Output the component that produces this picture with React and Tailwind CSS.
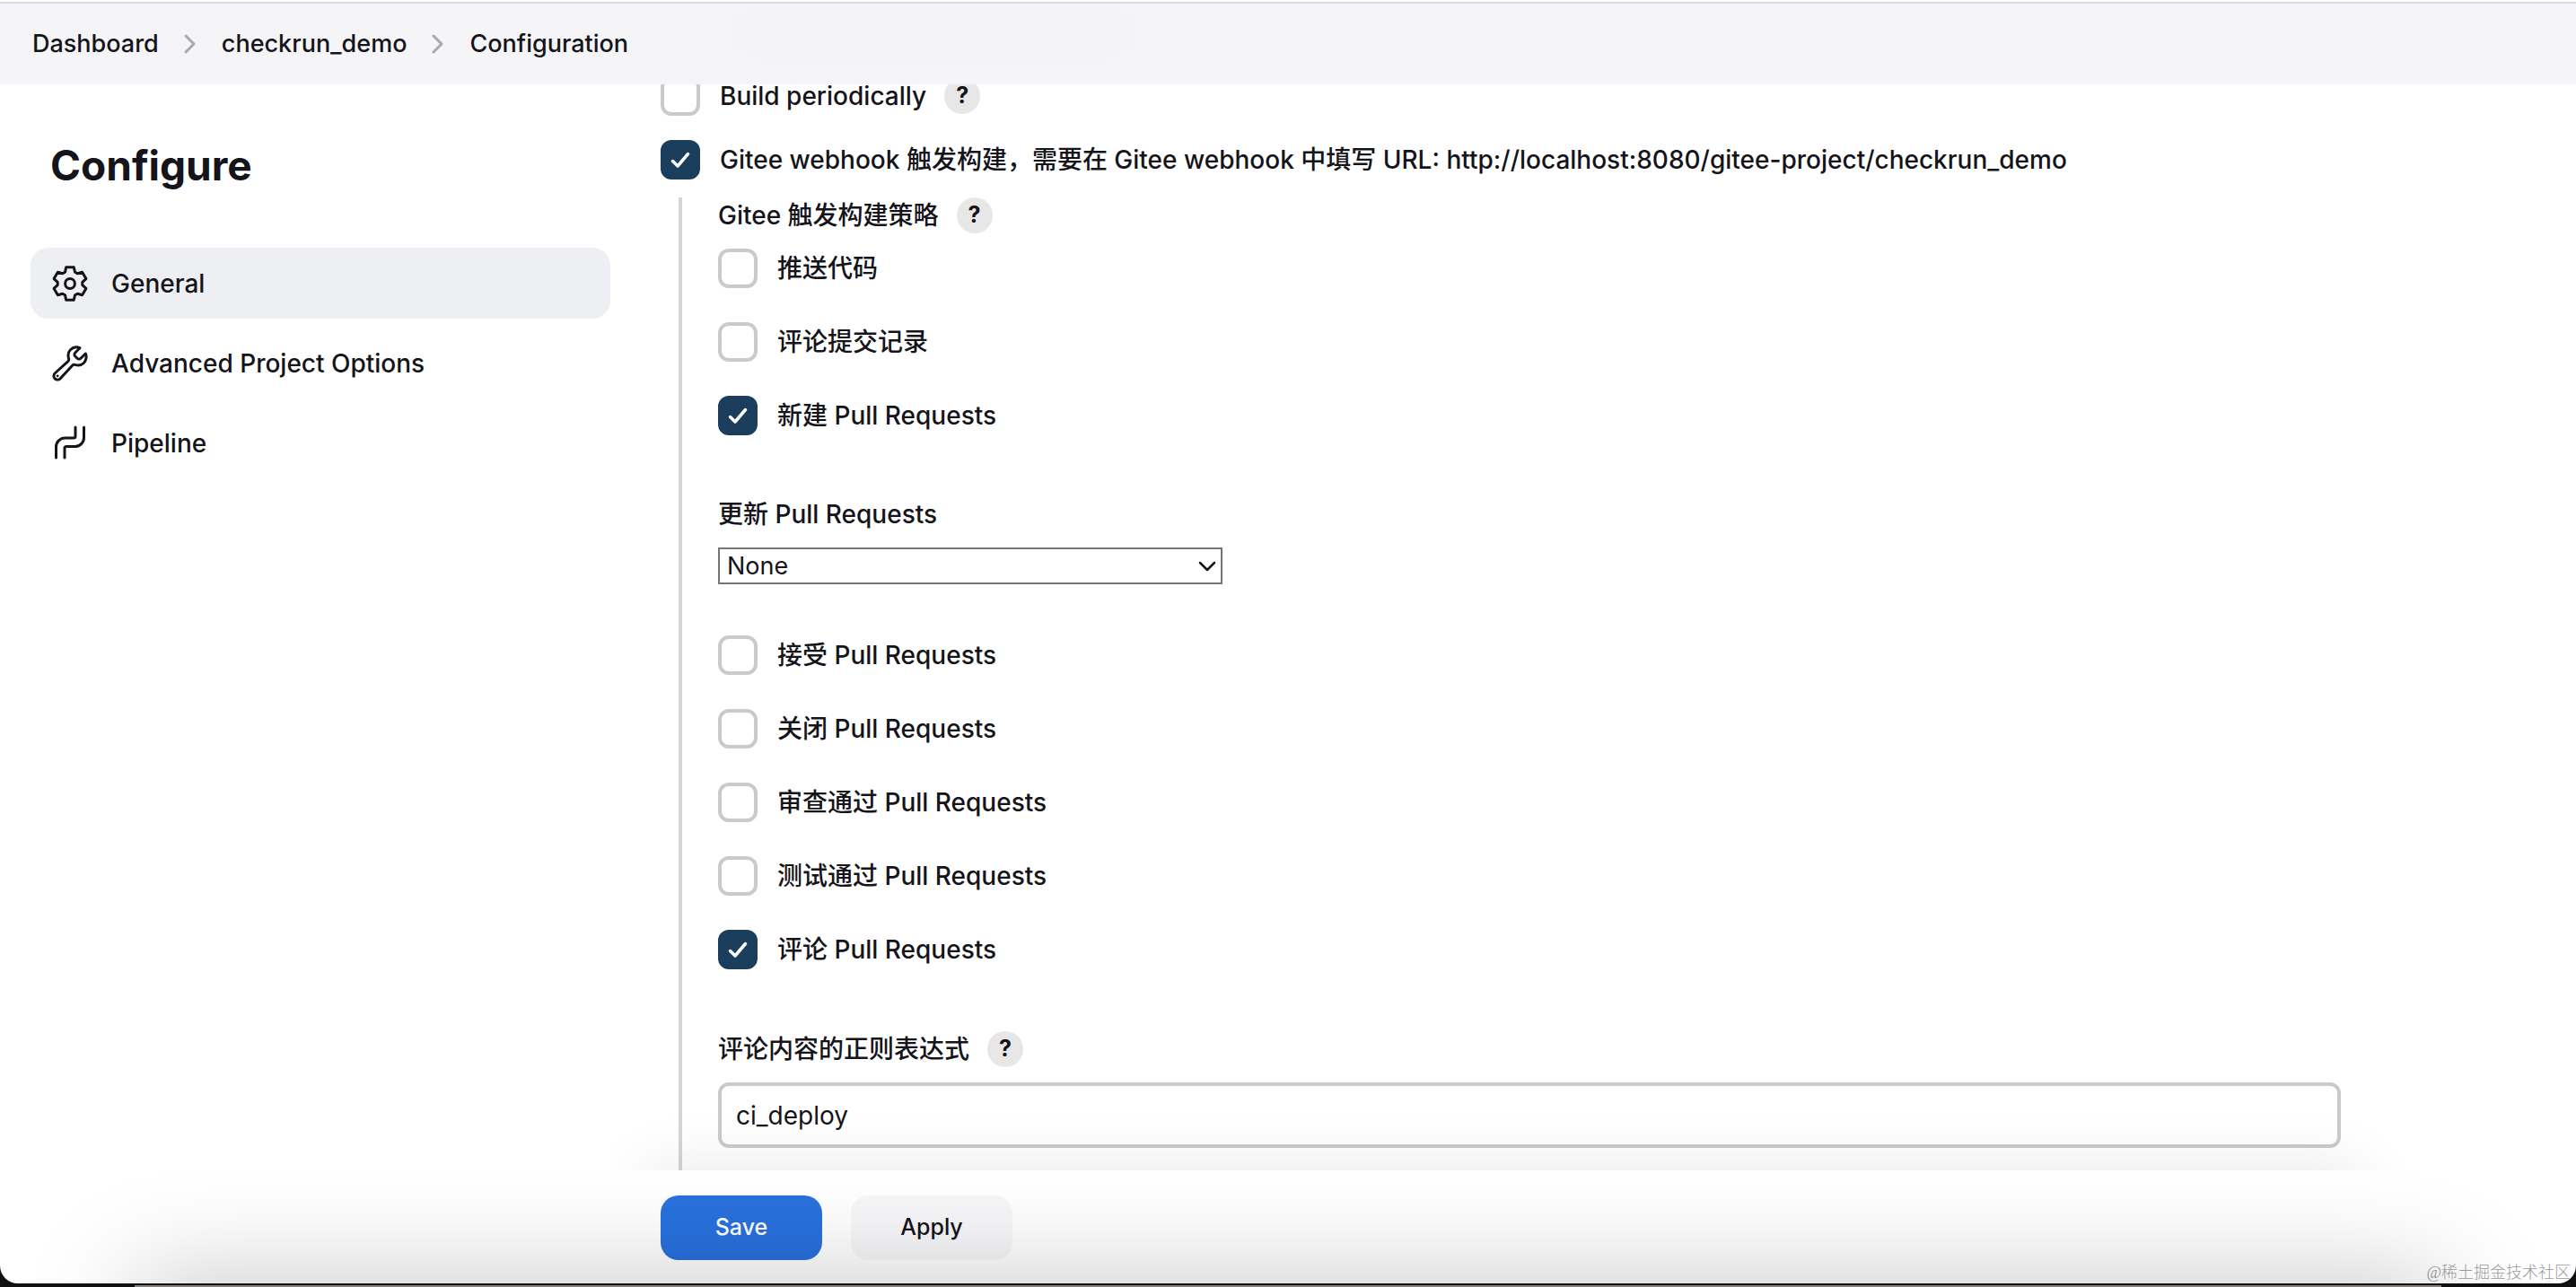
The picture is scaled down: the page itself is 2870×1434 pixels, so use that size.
import React, { useState } from 'react';

const NAV_ITEMS = [
  { id: 'general', label: 'General', icon: GearIcon },
  { id: 'advanced', label: 'Advanced Project Options', icon: WrenchIcon },
  { id: 'pipeline', label: 'Pipeline', icon: PipelineIcon },
];

const PUSH_OPTIONS = [
  { id: 'push', label: '推送代码' },
  { id: 'commitComment', label: '评论提交记录' },
  { id: 'openPr', label: '新建 Pull Requests' },
];

const PR_OPTIONS = [
  { id: 'acceptPr', label: '接受 Pull Requests' },
  { id: 'closePr', label: '关闭 Pull Requests' },
  { id: 'approvedPr', label: '审查通过 Pull Requests' },
  { id: 'testedPr', label: '测试通过 Pull Requests' },
  { id: 'commentPr', label: '评论 Pull Requests' },
];

function GearIcon() {
  return (
    <svg viewBox="-20 -20 40 40" className="size-10" fill="none" stroke="currentColor" strokeWidth="3" strokeLinecap="round" strokeLinejoin="round">
      <path d="M-5.5-12.8L-4.3-18.2H4.3L5.5-12.8L8.3-11.2L13.6-12.8L17.9-5.4L13.8-1.6V1.6L17.9 5.4L13.6 12.8L8.3 11.2L5.5 12.8L4.3 18.2H-4.3L-5.5 12.8L-8.3 11.2L-13.6 12.8L-17.9 5.4L-13.8 1.6V-1.6L-17.9-5.4L-13.6-12.8L-8.3-11.2Z" />
      <circle r="5.4" />
    </svg>
  );
}

function WrenchIcon() {
  return (
    <svg viewBox="26 26 460 460" className="size-10" fill="none" stroke="currentColor" strokeWidth="34" strokeLinecap="round" strokeLinejoin="round">
      <path d="M393.87 190a32.1 32.1 0 01-45.25 0l-26.57-26.57a32.09 32.09 0 010-45.26L382.19 58a1 1 0 00-.3-1.64c-38.82-16.64-89.15-8.16-121.11 23.57-30.58 30.35-32.32 76-21.12 115.84a31.93 31.93 0 01-9.06 32.08L64 380a48.17 48.17 0 1068 68l153.86-167a31.93 31.93 0 0131.6-9.13c39.54 10.59 84.54 8.6 114.72-21.19 32.49-32 39.5-88.56 23.75-120.93a1 1 0 00-1.6-.26z" />
      <circle cx="96" cy="416" r="16" fill="currentColor" stroke="none" />
    </svg>
  );
}

function PipelineIcon() {
  return (
    <svg viewBox="0 0 40 40" className="size-10" fill="none" stroke="currentColor" strokeWidth="3" strokeLinecap="round">
      <path d="M4.5 36V24a10 10 0 0 1 10-10H24a2 2 0 0 0 2-2V2" />
      <path d="M14 36V25.500a2 2 0 0 1 2-2h9.500a10 10 0 0 0 10-10V2" />
    </svg>
  );
}

function Separator() {
  return (
    <svg viewBox="0 0 16 24" className="h-6 w-4 text-[#a8a8ae]" fill="none" stroke="currentColor" strokeWidth="3" strokeLinecap="round" strokeLinejoin="round">
      <path d="M3 3l9 9-9 9" />
    </svg>
  );
}

function HelpButton({ label }) {
  return (
    <button
      type="button"
      aria-label={`Help for ${label}`}
      className="flex size-10 items-center justify-center rounded-full bg-[#e7e7e7] text-[25px] font-bold"
    >
      ?
    </button>
  );
}

function Checkbox({ id, label, checked, onChange, help }) {
  return (
    <div className="flex h-11 items-center gap-5">
      <label htmlFor={id} className="flex items-center gap-[22px] whitespace-nowrap">
        <span className="grid size-11 shrink-0">
          <input
            id={id}
            type="checkbox"
            checked={checked}
            onChange={() => onChange(id)}
            className="col-start-1 row-start-1 size-11 appearance-none rounded-xl border-4 border-[#c8cacb] bg-white checked:border-[#1a3e5c] checked:bg-[#1a3e5c]"
          />
          {checked && (
            <svg viewBox="0 0 44 44" className="pointer-events-none col-start-1 row-start-1 size-11" fill="none" stroke="white" strokeWidth="3.5" strokeLinecap="round" strokeLinejoin="round">
              <path d="M13.500 23.500l5.500 5.500 11.500-13.500" />
            </svg>
          )}
        </span>
        {label}
      </label>
      {help && <HelpButton label={label} />}
    </div>
  );
}

export default function App() {
  const [active, setActive] = useState('general');
  const [updateMode, setUpdateMode] = useState('None');
  const [pattern, setPattern] = useState('ci_deploy');
  const [checked, setChecked] = useState({
    webhook: true,
    openPr: true,
    commentPr: true,
  });

  const toggle = (id) => {
    setChecked(prev => ({ ...prev, [id]: !prev[id] }));
  };

  return (
    <div className="flex h-screen flex-col bg-[#111111] font-[Inter,'Noto_Sans_CJK_SC',sans-serif] text-[28px] font-medium text-[#14141a]">
      <div className="relative flex min-h-0 flex-1 flex-col overflow-hidden rounded-b-[20px] bg-white">
        <header className="relative z-10 shrink-0 overflow-hidden bg-white pt-0.5">
          <nav aria-label="Breadcrumb" className="flex h-[92px] items-center gap-[27px] border-t-2 border-[#dcdce0] bg-[#f5f5f8] px-9 text-[27px]">
            <a href="#dashboard">Dashboard</a>
            <Separator />
            <a href="#job">checkrun_demo</a>
            <Separator />
            <a href="#configuration">Configuration</a>
          </nav>
          <div className="pointer-events-none absolute top-4 left-[830px] h-10 w-[420px] bg-black/1 blur-lg" />
        </header>

        <div className="flex min-h-0 flex-1 gap-14">
          <aside className="w-[680px] shrink-0 pt-[58px] pl-[34px]">
            <h1 className="pl-[22px] text-[46px] leading-[64px] font-bold">Configure</h1>
            <nav aria-label="Sections" className="mt-[60px] flex flex-col gap-2.5">
              {NAV_ITEMS.map(({ id, label, icon: Icon }) => (
                <button
                  key={id}
                  type="button"
                  onClick={() => setActive(id)}
                  className={`flex h-[79px] items-center gap-[26px] rounded-[20px] px-6 text-left ${
                    active === id ? 'bg-[#eeeff3]' : 'bg-transparent'
                  }`}
                >
                  <Icon />
                  {label}
                </button>
              ))}
            </nav>
          </aside>

          <form className="flex min-w-0 flex-1 flex-col" onSubmit={(e) => e.preventDefault()}>
            <div className="relative -ml-14 min-h-0 flex-1 overflow-hidden pr-[262px] pl-14">
              <div className="-mt-[9px]">
                <Checkbox id="periodic" label="Build periodically" checked={!!checked.periodic} onChange={toggle} help />
                <div className="mt-[27px]">
                  <Checkbox
                    id="webhook"
                    label="Gitee webhook 触发构建，需要在 Gitee webhook 中填写 URL: http://localhost:8080/gitee-project/checkrun_demo"
                    checked={checked.webhook}
                    onChange={toggle}
                  />
                </div>

                <div className="mt-5 ml-5 border-l-4 border-[#d3d6d8] pb-[25px] pl-10">
                  <fieldset>
                    <legend className="sr-only">Gitee 触发构建策略</legend>
                    <div className="flex h-10 items-center gap-5">
                      <span>Gitee 触发构建策略</span>
                      <HelpButton label="Gitee 触发构建策略" />
                    </div>
                    <div className="mt-[17px] flex flex-col gap-[38px]">
                      {PUSH_OPTIONS.map(({ id, label }) => (
                        <Checkbox key={id} id={id} label={label} checked={!!checked[id]} onChange={toggle} />
                      ))}
                    </div>
                  </fieldset>

                  <div className="mt-[68px]">
                    <label htmlFor="updatePr" className="flex h-10 items-center">更新 Pull Requests</label>
                    <div className="mt-[17px] grid w-[562px] items-center">
                      <select
                        id="updatePr"
                        value={updateMode}
                        onChange={(e) => setUpdateMode(e.target.value)}
                        className="col-start-1 row-start-1 h-[41px] w-full appearance-none border-2 border-[#767676] bg-white px-2 text-[27px] leading-9 font-normal"
                      >
                        <option>None</option>
                        <option>Source updated</option>
                        <option>Target updated</option>
                        <option>Both updated</option>
                      </select>
                      <svg viewBox="0 0 20 12" className="pointer-events-none col-start-1 row-start-1 mr-[7px] h-3 w-5 justify-self-end" fill="none" stroke="currentColor" strokeWidth="2.5" strokeLinecap="round" strokeLinejoin="round">
                        <path d="M2 2l8 8 8-8" />
                      </svg>
                    </div>
                  </div>

                  <div className="mt-[57px] flex flex-col gap-[38px]">
                    {PR_OPTIONS.map(({ id, label }) => (
                      <Checkbox key={id} id={id} label={label} checked={!!checked[id]} onChange={toggle} />
                    ))}
                  </div>

                  <div className="mt-[69px]">
                    <div className="flex h-10 items-center gap-5">
                      <label htmlFor="pattern">评论内容的正则表达式</label>
                      <HelpButton label="评论内容的正则表达式" />
                    </div>
                    <input
                      id="pattern"
                      type="text"
                      value={pattern}
                      onChange={(e) => setPattern(e.target.value)}
                      className="mt-[17px] block h-[73px] w-full rounded-xl border-4 border-[#c8cacb] bg-white px-4 font-normal"
                    />
                  </div>
                </div>
              </div>
              {/* shadow cast upwards by the button bar */}
              <div className="pointer-events-none absolute top-full right-[240px] left-10 h-24 shadow-[0_0_70px_rgba(0,0,0,0.1)]" />
            </div>

            <div className="flex shrink-0 gap-8 pt-7 pb-[26px] text-[25px]">
              <button type="submit" className="h-[72px] w-[180px] rounded-[20px] bg-[#2971de] text-white">
                Save
              </button>
              <button type="button" className="h-[72px] w-[180px] rounded-[20px] bg-[#f7f7fa]">
                Apply
              </button>
            </div>
          </form>
        </div>

        <div className="pointer-events-none absolute top-full right-[150px] left-[150px] h-24 shadow-[0_0_120px_rgba(0,0,0,0.25)]" />
        <p className="pointer-events-none absolute right-[6px] bottom-0 font-['Liberation_Serif','Noto_Sans_CJK_SC',serif] text-lg leading-6 font-light text-[#9a9a9a]">
          @稀土掘金技术社区
        </p>
      </div>
      <div className="h-1 shrink-0 px-[150px] pt-0.5">
        <div className="h-0.5 bg-[#85817e]" />
      </div>
    </div>
  );
}
